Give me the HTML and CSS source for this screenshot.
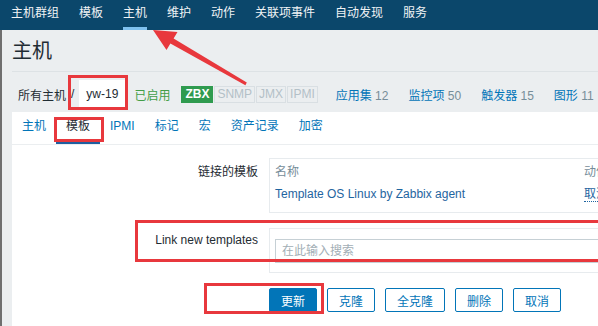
FILE: index.html
```html
<!DOCTYPE html>
<html lang="zh">

<head>
    <meta charset="UTF-8">
    <meta name="viewport" content="width=device-width, initial-scale=1.0">
    <title>主机 - 模板</title>
    <link rel="stylesheet" href="styles.css">
</head>

<body>
    <nav class="topnav">
        <a href="#">主机群组</a>
        <a href="#">模板</a>
        <a href="#" class="selected">主机</a>
        <a href="#">维护</a>
        <a href="#">动作</a>
        <a href="#">关联项事件</a>
        <a href="#">自动发现</a>
        <a href="#">服务</a>
    </nav>

    <div class="page">
        <h1 class="page-title">主机</h1>

        <div class="host-nav">
            <a href="#" class="crumb">所有主机</a>
            <span class="sep">/</span>
            <span class="crumb current">yw-19</span>
            <span class="status">已启用</span>
            <span class="avail">
                <span class="badge on">ZBX</span>
                <span class="badge">SNMP</span>
                <span class="badge">JMX</span>
                <span class="badge">IPMI</span>
            </span>
            <a href="#" class="count first">应用集 <span>12</span></a>
            <a href="#" class="count">监控项 <span>50</span></a>
            <a href="#" class="count">触发器 <span>15</span></a>
            <a href="#" class="count">图形 <span>11</span></a>
        </div>

        <div class="panel">
            <ul class="tabs">
                <li><a href="#">主机</a></li>
                <li class="active"><a href="#">模板</a></li>
                <li><a href="#">IPMI</a></li>
                <li><a href="#">标记</a></li>
                <li><a href="#">宏</a></li>
                <li><a href="#">资产记录</a></li>
                <li><a href="#">加密</a></li>
            </ul>

            <form class="form">
                <div class="row">
                    <label class="label first-label">链接的模板</label>
                    <div class="field-box">
                        <table class="linked">
                            <thead>
                                <tr>
                                    <th>名称</th>
                                    <th>动作</th>
                                </tr>
                            </thead>
                            <tbody>
                                <tr>
                                    <td><a href="#">Template OS Linux by Zabbix agent</a></td>
                                    <td><a href="#" class="unlink">取消链接</a></td>
                                </tr>
                            </tbody>
                        </table>
                    </div>
                </div>

                <div class="row">
                    <label class="label" for="search">Link new templates</label>
                    <div class="field-box search-box">
                        <input type="text" id="search" placeholder="在此输入搜索">
                    </div>
                </div>

                <div class="buttons">
                    <button type="button" class="primary">更新</button>
                    <button type="button">克隆</button>
                    <button type="button">全克隆</button>
                    <button type="button">删除</button>
                    <button type="button">取消</button>
                </div>
            </form>
        </div>
    </div>

    <!-- screenshot annotations -->
    <div class="mark mark-host"></div>
    <div class="mark mark-tab"></div>
    <div class="mark mark-link"></div>
    <div class="mark mark-btn"></div>
    <svg class="arrow" width="598" height="326" viewBox="0 0 598 326">
        <polygon points="153,30 177.5,32 173.6,38.6 246.8,82.6 245.4,85.2 170.4,43.4 166.5,50" fill="#e8383d" />
    </svg>
</body>

</html>
```

FILE: styles.css
```css
* {
    box-sizing: border-box;
}

body {
    margin: 0;
    width: 598px;
    height: 326px;
    overflow: hidden;
    background-color: #ebeef0;
    font-family: "Liberation Sans", "Noto Sans CJK SC", sans-serif;
    font-size: 12px;
    color: #1f2c33;
}

a {
    text-decoration: none;
    color: #0275b8;
}

.topnav {
    display: flex;
    height: 30px;
    padding-left: 11px;
    background-color: #0b476b;
    white-space: nowrap;
}

.topnav a {
    display: block;
    margin-right: 20px;
    line-height: 27px;
    border-bottom: 3px solid transparent;
    color: #f0f3f5;
}

.topnav a.selected {
    border-bottom-color: #7fc1ee;
}

.page {
    height: 296px;
    padding-left: 10px;
    border-left: 2px solid #6f6f6f;
}

.page-title {
    margin: 0;
    height: 42px;
    line-height: 42px;
    font-size: 20px;
    font-weight: normal;
    border-bottom: 1px solid #dde2e5;
}

.host-nav {
    display: flex;
    align-items: center;
    height: 40px;
    padding: 4px 0 0 6px;
    white-space: nowrap;
}

.crumb {
    color: #1f2c33;
}

.sep {
    margin: 0 5px;
}

.crumb.current {
    padding: 0 7px;
    line-height: 28px;
    background-color: #ffffff;
}

.status {
    margin-left: 9px;
    color: #429e47;
}

.avail {
    display: flex;
    gap: 1px;
    margin-left: 11px;
}

.badge {
    padding: 0 2px;
    line-height: 15px;
    border: 1px solid #d9dfe3;
    color: #b3c0c7;
}

.badge.on {
    border-color: #2f9b4f;
    background-color: #2f9b4f;
    color: #ffffff;
    font-weight: bold;
    padding: 0 3px;
}

.count {
    margin-left: 20px;
}

.count.first {
    margin-left: 18px;
}

.count span {
    color: #768d99;
}

.panel {
    height: 214px;
    background-color: #ffffff;
}

.tabs {
    display: flex;
    margin: 0;
    padding: 0;
    list-style: none;
    border-bottom: 1px solid #ebeef0;
}

.tabs a {
    display: block;
    padding: 0 10px;
    line-height: 29px;
    border-bottom: 3px solid transparent;
}

.tabs .active a {
    color: #1f2c33;
    border-bottom-color: #1f5fa0;
}

.form {
    padding-top: 13px;
}

.row {
    display: flex;
    margin-bottom: 15px;
}

.label {
    width: 246px;
    padding: 5px 0 0;
    line-height: 14px;
    text-align: right;
    flex: none;
}

.first-label {
    padding-top: 7px;
}

.field-box {
    margin-left: 11px;
    width: 420px;
    flex: none;
    border: 1px solid #e7ebee;
}

.linked {
    border-collapse: collapse;
}

.linked th,
.linked td {
    padding: 0 5px;
    text-align: left;
    white-space: nowrap;
    line-height: 14px;
}

.linked th {
    padding-top: 6px;
    font-weight: normal;
    color: #768d99;
}

.linked th:first-child {
    width: 309px;
}

.linked td {
    padding-top: 8px;
    padding-bottom: 11px;
}

.linked a {
    color: #1f65a0;
}

.linked .unlink {
    border-bottom: 1px dotted #1f65a0;
}

.search-box {
    padding: 10px 5px 9px;
}

.search-box input {
    width: 460px;
    height: 24px;
    padding: 0 6px;
    border: 1px solid #c6d0d5;
    font-family: inherit;
    font-size: 12px;
    outline: none;
}

.search-box input::placeholder {
    color: #a2aeb5;
}

.buttons {
    display: flex;
    gap: 10px;
    padding-left: 257px;
}

.buttons button {
    height: 24px;
    padding: 0 11px;
    border: 1px solid #0275b8;
    border-radius: 2px;
    background-color: #ffffff;
    color: #0275b8;
    font-family: inherit;
    font-size: 12px;
}

.buttons button.primary {
    background-color: #0275b8;
    color: #ffffff;
}

.mark {
    position: absolute;
    border: 3px solid #e8383d;
}

.mark-host {
    left: 68px;
    top: 75px;
    width: 60px;
    height: 35px;
}

.mark-tab {
    left: 54px;
    top: 117px;
    width: 50px;
    height: 25px;
}

.mark-link {
    left: 135px;
    top: 220px;
    width: 470px;
    height: 42px;
}

.mark-btn {
    left: 204px;
    top: 283px;
    width: 120px;
    height: 31px;
}

.arrow {
    position: absolute;
    left: 0;
    top: 0;
}
```
